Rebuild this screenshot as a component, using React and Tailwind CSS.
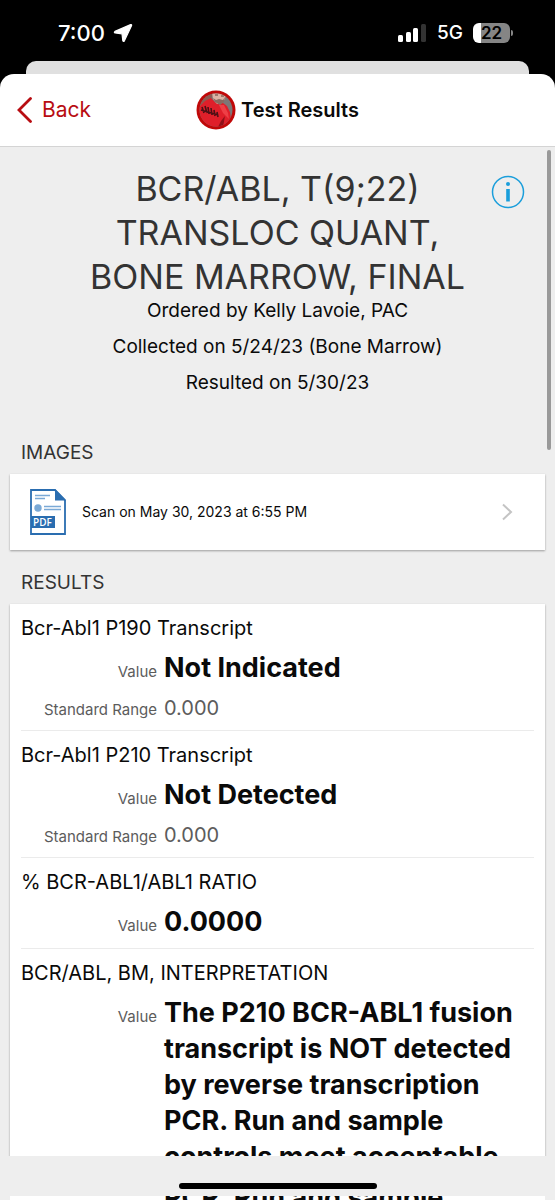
import React from 'react';

const RESULTS = [
  { name: 'Bcr-Abl1 P190 Transcript', value: 'Not Indicated', range: '0.000' },
  { name: 'Bcr-Abl1 P210 Transcript', value: 'Not Detected', range: '0.000' },
  { name: '% BCR-ABL1/ABL1 RATIO', value: '0.0000' },
  {
    name: 'BCR/ABL, BM, INTERPRETATION',
    value:
      'The P210 BCR-ABL1 fusion transcript is NOT detected by reverse transcription PCR. Run and sample controls meet acceptable',
  },
];

const StatusBar = () => (
  <div className="h-[61px] shrink-0 flex items-center justify-between pl-[58px] pr-[42px] pt-[5px] text-white">
    <div className="flex items-center gap-2">
      <span className="text-[22px] leading-7 font-medium">7:00</span>
      <svg viewBox="0 0 20 20" className="w-5 h-5" fill="currentColor">
        <path
          d="M17.6 1.6 2 8.4Q.6 9.6 2.2 10L9 10.8 9.8 17.6Q10.4 19.2 11.4 17.8L18.6 2.6Q18.8 1.2 17.6 1.6Z"
          stroke="currentColor"
          strokeWidth="1.2"
          strokeLinejoin="round"
        />
      </svg>
    </div>
    <div className="flex items-center gap-2.5">
      <svg viewBox="0 0 29 18" className="w-[29px] h-[18px]" fill="currentColor">
        <rect x="0" y="11" width="5" height="7" rx="1.5" />
        <rect x="8" y="8" width="5" height="10" rx="1.5" />
        <rect x="15" y="4" width="5" height="14" rx="1.5" />
        <rect x="23" y="0" width="5" height="18" rx="1.5" fill="#333" />
      </svg>
      <span className="text-[19px] leading-6 font-medium">5G</span>
      <div className="flex items-center gap-px">
        <div className="w-[37px] h-5 rounded-md bg-linear-to-r from-white from-22% to-[#858585] to-22% flex items-center justify-center">
          <span className="text-[17px] leading-5 font-semibold text-black">22</span>
        </div>
        <span className="w-0.5 h-1.5 rounded-r-full bg-[#858585]" />
      </div>
    </div>
  </div>
);

const Avatar = () => (
  <svg viewBox="0 0 40 40" className="w-10 h-10">
    <defs>
      <clipPath id="avatar">
        <circle cx="20" cy="20" r="16.5" />
      </clipPath>
    </defs>
    <circle cx="20" cy="20" r="19.5" fill="#c00808" />
    <g clipPath="url(#avatar)">
      <rect width="40" height="40" fill="#7d7777" />
      <path d="M2 2H18L15 9 4 16Z" fill="#8e5a52" />
      <path d="M2 18 9 11 15 8 20 13 27 13 31 16 34 22 35 30 32 40H6Z" fill="#df1f2a" />
      <path d="M23 15 28 15 32 23 33 29 27 23Z" fill="#ee3f46" />
      <path d="M16 2H30L29 9 26 13 21 14 17 9Z" fill="#dcb3a4" />
      <path d="M17 8 20 10 23 9 27 10 29 7 28 12 24 15 19 12Z" fill="#8a6a60" />
      <path d="M19 5H22M25 6H28" stroke="#5b4038" strokeWidth="1" />
      <path d="M25 31 29 26 27 37 22 37Z" fill="#8f1018" />
      <path d="m6 17 2 6M9 16l2 7M12 17l1 7M15 18l1 7M18 20l1 6M21 22l1 5M5 20l17 5" stroke="#4c1015" strokeWidth="1.6" />
    </g>
  </svg>
);

const PdfIcon = () => (
  <svg viewBox="0 0 36 46" className="w-9 h-[46px] shrink-0">
    <path d="M1 1H25L35 11V45H1Z" fill="#fff" stroke="#2a6db0" strokeWidth="1.8" />
    <path d="M25 0 36 11.5H25Z" fill="#2a6db0" />
    <path d="M5 6.5H20M5 9.5H15M14 17.5H31M14 20.5H31" stroke="#7aa9d6" strokeWidth="1.4" />
    <circle cx="8" cy="19" r="3.7" fill="#7aa9d6" />
    <rect x="1" y="27" width="24" height="12" fill="#2a6db0" />
    <text x="3" y="37" fontSize="10" fontWeight="600" fill="#fff" fontFamily="Open Sans, sans-serif">
      PDF
    </text>
  </svg>
);

const ResultRow = ({ name, value, range }) => (
  <li className="flex flex-col gap-2 pt-2.5 pb-2 border-b border-[#ebebeb]">
    <h3 className="text-[20px] leading-7">{name}</h3>
    <dl className="grid grid-cols-[136px_1fr] items-baseline gap-x-[7px] gap-y-2">
      <dt className="text-right text-[15px] leading-6 text-[#5c5c5c]">Value</dt>
      <dd className="text-[27px] leading-9 font-bold">{value}</dd>
      {range && (
        <>
          <dt className="text-right text-[15px] leading-6 text-[#5c5c5c]">Standard Range</dt>
          <dd className="text-[20px] leading-7 text-[#5c5c5c]">{range}</dd>
        </>
      )}
    </dl>
  </li>
);

const App = () => (
  <div className="h-screen flex flex-col overflow-hidden bg-black font-['Inter',sans-serif] text-[#0a0a0a]">
    <StatusBar />
    <div className="h-[13px] shrink-0 mx-[26px] rounded-t-[10px] bg-[#e0e0e0]" />

    <header className="h-[73px] shrink-0 grid grid-cols-[1fr_auto_1fr] items-center px-4 rounded-t-[14px] bg-white border-b border-[#d4d4d4]">
      <button type="button" className="justify-self-start flex items-center gap-2.5 text-[21px] leading-7 text-[#b80d12]">
        <svg viewBox="0 0 16 26" className="w-4 h-[26px]" fill="none" stroke="currentColor" strokeWidth="2.8">
          <path d="M14.5 1.5 3 13 14.5 24.5" strokeLinecap="round" />
        </svg>
        Back
      </button>
      <div className="flex items-center gap-[5px]">
        <Avatar />
        <h1 className="text-[20px] leading-7 font-semibold">Test Results</h1>
      </div>
    </header>

    <main className="relative flex-1 min-h-0 overflow-hidden bg-[#eeeeee] px-2.5">
      <div className="absolute top-[3px] right-1 w-1 h-[300px] rounded-full bg-[#999]" />
      <button type="button" aria-label="About this test" className="absolute top-7 right-[30px]">
        <svg viewBox="0 0 34 34" className="w-[34px] h-[34px]" fill="#1a9edb">
          <circle cx="17" cy="17" r="15.5" fill="none" stroke="#1a9edb" strokeWidth="1.5" />
          <circle cx="17" cy="9" r="2" />
          <rect x="15.2" y="14" width="3.6" height="12.5" />
        </svg>
      </button>

      <section className="px-16 pt-5 text-center">
        <h2 className="text-[34px] leading-[44px] text-[#333]">BCR/ABL, T(9;22) TRANSLOC QUANT, BONE MARROW, FINAL</h2>
        <div className="flex flex-col gap-3 text-[19px] leading-6">
          <p>Ordered by Kelly Lavoie, PAC</p>
          <p>Collected on 5/24/23 (Bone Marrow)</p>
          <p>Resulted on 5/30/23</p>
        </div>
      </section>

      <h2 className="pl-[11px] pt-11 pb-[7px] text-[19px] leading-7 text-[#333]">IMAGES</h2>
      <a href="#scan" className="h-[76px] flex items-center gap-4 pl-5 pr-8 bg-white shadow-[0_1px_2px_rgba(0,0,0,0.35)]">
        <PdfIcon />
        <span className="flex-1 text-[14px] leading-6">Scan on May 30, 2023 at 6:55 PM</span>
        <svg viewBox="0 0 12 18" className="w-3 h-[18px]" fill="none" stroke="#c4c4c4" strokeWidth="2">
          <path d="m2 1.5 8 7.5-8 7.5" />
        </svg>
      </a>

      <h2 className="pl-[11px] pt-[19px] pb-[7px] text-[19px] leading-7 text-[#333]">RESULTS</h2>
      <ul className="px-[11px] bg-white shadow-[0_1px_2px_rgba(0,0,0,0.35)]">
        {RESULTS.map((result) => (
          <ResultRow key={result.name} {...result} />
        ))}
      </ul>
    </main>

    <footer className="h-10 shrink-0 flex items-end justify-center pb-[7px] bg-[#eeeeee]">
      <div className="w-[198px] h-1.5 rounded-full bg-black" />
    </footer>
    {/* edge of the list that shows under the home bar */}
    <div className="h-1 shrink-0 flex items-center overflow-hidden px-2.5 bg-[#eeeeee]">
      <p className="flex-1 shrink-0 pl-[154px] bg-white text-[27px] leading-9 font-bold">PCR. Run and sample</p>
    </div>
  </div>
);

export default App;
